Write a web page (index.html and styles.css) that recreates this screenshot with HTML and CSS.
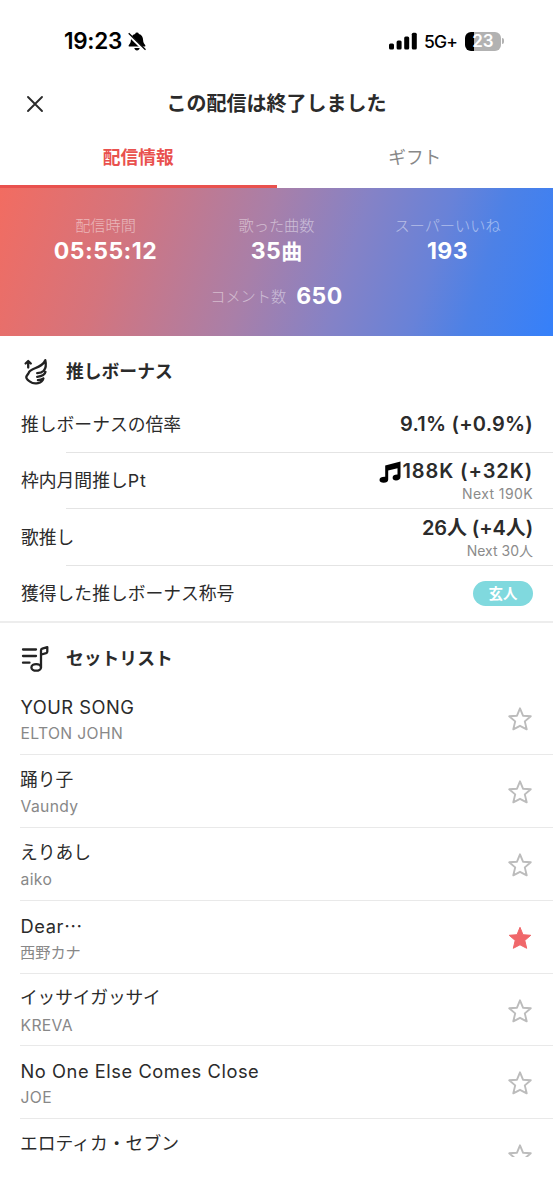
FILE: index.html
```html
<!DOCTYPE html>
<html lang="ja">
<head>
<meta charset="utf-8">
<title>この配信は終了しました</title>
<link rel="stylesheet" href="styles.css">
</head>
<body>
<main class="screen">
  <div class="status">
    <div class="status-left">
      <span class="clock">19:23</span>
      <svg class="bell" viewBox="0 0 18 19"><path d="M9 .5a2 2 0 0 1 1.900 1.400C13.800 2.700 15 5 15.100 8c.1 2.800 1 3.700 2 4.900.6.8.2 1.700-.7 1.700H1.600c-.9 0-1.300-.9-.7-1.700 1-1.200 1.900-2.100 2-4.900.1-3 1.300-5.300 4.200-6.100A2 2 0 0 1 9 .5zM6.300 16h5.400c-.3 1.500-1.300 2.400-2.700 2.400S6.600 17.500 6.300 16z"/><path d="M.2 2.200 16.600 18.400" stroke="#fff" stroke-width="3"/><path d="M.7 1.200 17.500 17.800" stroke="#000" stroke-width="1.300"/></svg>
    </div>
    <div class="status-right">
      <svg class="signal" viewBox="0 0 28 18"><rect x="0" y="11.500" width="5" height="6" rx="1.500"/><rect x="7.600" y="8.500" width="5" height="9" rx="1.500"/><rect x="15.200" y="4.500" width="5" height="13" rx="1.500"/><rect x="22.800" y=".7" width="5" height="16.800" rx="1.500"/></svg>
      <span class="network">5G+</span>
      <span class="battery">23</span><span class="battery-tip"></span>
    </div>
  </div>
  <header class="header">
    <svg class="close" viewBox="0 0 16 16"><path d="M1 1l14 14M15 1L1 15"/></svg>
    <h1>この配信は終了しました</h1>
  </header>
  <nav class="tabs"><a class="tab active">配信情報</a><a class="tab">ギフト</a></nav>

  <section class="stats">
    <div class="stats-row">
      <div class="stat"><span class="label">配信時間</span><b>05:55:12</b></div>
      <div class="stat"><span class="label">歌った曲数</span><b>35<i>曲</i></b></div>
      <div class="stat"><span class="label">スーパーいいね</span><b>193</b></div>
    </div>
    <div class="comments"><span class="label">コメント数</span><b>650</b></div>
  </section>

  <section class="bonus">
    <h2><svg class="icon" viewBox="0 0 28 28"><path d="M7.200 10.600V4.500M4.600 6.500 7.200 4l2.600 2.500M24.300 3.200C22.300 8 18.500 9.500 14 11.300 10.800 12.500 8.500 13.500 7.600 16 7 17.500 5.500 18.500 5.300 20c-.3 2.200 1.700 3.200 3.700 4.600 2 1.600 5 2.200 8 1.500 2.700-.6 4.700-2.100 5.400-4.600M24.300 3.200c1.200 5 .6 8-1.600 10.500-1.500 1.600-3.700 2.300-6.500 2.500M24.500 14.800c-.6 3.300-3.700 4.600-8.300 5M22.400 21.500c-1.400 1-3.200 1.500-5.500 1.600"/></svg>推しボーナス</h2>
    <div class="item"><span class="name">推しボーナスの倍率</span><div class="value"><b class="rate">9.1% (+0.9%)</b></div></div>
    <div class="item"><span class="name">枠内月間推し<span class="unit">Pt</span></span><div class="value"><b class="points"><svg class="note" viewBox="0 0 22 22"><path d="M6.200 4.500 21.500.5v15.200c0 2.500-2 3.800-4.500 3.800-2 0-3.400-.9-3.400-2.700 0-2.200 2-3.300 4.900-3.200V7.200L9.200 9.500v8.900c0 2.200-1.900 3.300-4.500 3.300C2.200 21.700.5 20.700.5 19c0-2.300 2.200-3.300 5.700-3.200z"/></svg>188K (+32K)</b><small>Next 190K</small></div></div>
    <div class="item"><span class="name">歌推し</span><div class="value"><b class="people">26人 (+4人)</b><small class="people-next">Next 30人</small></div></div>
    <div class="item"><span class="name">獲得した推しボーナス称号</span><span class="badge">玄人</span></div>
  </section>

  <section class="setlist">
    <h2><svg class="icon" viewBox="0 0 28 28"><path d="M2 5.500h13M2 12h13M2 18.700h6.500M20 23.300V6.500c0-1 .4-1.500 1.300-1.800l5-1.600v4.400c0 .9-.4 1.400-1.200 1.700L20.500 10.500"/><ellipse cx="15.200" cy="23.400" rx="4.800" ry="3.300"/></svg>セットリスト</h2>
    <div class="song"><div><p class="title caps">YOUR SONG</p><p class="artist en">ELTON JOHN</p></div><svg class="star" viewBox="0 0 24 24"><path d="M12 1.300 15 8.700l7.800.6-6 5.100 1.900 7.900-6.700-3.500-6.700 3.500 1.900-7.900-6-5.100L9 8.700z"/></svg></div>
    <div class="song"><div><p class="title">踊り子</p><p class="artist en">Vaundy</p></div><svg class="star" viewBox="0 0 24 24"><path d="M12 1.300 15 8.700l7.800.6-6 5.100 1.900 7.900-6.700-3.500-6.700 3.500 1.900-7.900-6-5.100L9 8.700z"/></svg></div>
    <div class="song"><div><p class="title">えりあし</p><p class="artist en">aiko</p></div><svg class="star" viewBox="0 0 24 24"><path d="M12 1.300 15 8.700l7.800.6-6 5.100 1.900 7.900-6.700-3.500-6.700 3.500 1.900-7.900-6-5.100L9 8.700z"/></svg></div>
    <div class="song"><div><p class="title latin">Dear<span class="dots">…</span></p><p class="artist">西野カナ</p></div><svg class="star on" viewBox="0 0 24 24"><path d="M12 1.300 15 8.700l7.800.6-6 5.100 1.900 7.900-6.700-3.500-6.700 3.500 1.900-7.900-6-5.100L9 8.700z"/></svg></div>
    <div class="song"><div><p class="title kana">イッサイガッサイ</p><p class="artist en">KREVA</p></div><svg class="star" viewBox="0 0 24 24"><path d="M12 1.300 15 8.700l7.800.6-6 5.100 1.900 7.900-6.700-3.500-6.700 3.500 1.900-7.900-6-5.100L9 8.700z"/></svg></div>
    <div class="song"><div><p class="title latin">No One Else Comes Close</p><p class="artist en">JOE</p></div><svg class="star" viewBox="0 0 24 24"><path d="M12 1.300 15 8.700l7.800.6-6 5.100 1.900 7.900-6.700-3.500-6.700 3.500 1.900-7.900-6-5.100L9 8.700z"/></svg></div>
    <div class="song"><div><p class="title">エロティカ・セブン</p></div><svg class="star" viewBox="0 0 24 24"><path d="M12 1.300 15 8.700l7.800.6-6 5.100 1.900 7.900-6.700-3.500-6.700 3.500 1.900-7.900-6-5.100L9 8.700z"/></svg></div>
  </section>
</main>
</body>
</html>
```
FILE: styles.css
```css
* { box-sizing: border-box; }
body { margin: 0; background: #fff; color: #2b2b2b; font-family: Inter, "Noto Sans CJK JP", sans-serif; }
h1, h2, p { margin: 0; }
i { font-style: normal; }
svg { flex: none; display: block; overflow: visible; }
.screen { height: 1157px; overflow: hidden; }

.status { height: 82px; padding: 0 49px 0 64px; display: flex; justify-content: space-between; align-items: center; color: #000; }
.status-left, .status-right { display: flex; align-items: center; }
.clock { font: 600 22.5px/24px Inter, sans-serif; letter-spacing: -.3px; }
.bell { width: 18px; height: 19px; margin-left: 6px; }
.signal { width: 28px; height: 18px; }
.network { font: 500 17.5px/20px Inter, sans-serif; letter-spacing: -.9px; margin-left: 7px; padding-top: 1px; }
.battery { width: 36px; height: 19px; margin-left: 8px; border-radius: 6px; background: linear-gradient(90deg, #000 9px, #b2b2b2 9px); color: #fff; font: 600 17px/19px Inter, sans-serif; text-align: center; }
.battery-tip { width: 2px; height: 6px; margin-left: 1px; border-radius: 0 2px 2px 0; background: #b2b2b2; }

.header { height: 42px; display: grid; grid-template-columns: 80px 1fr 80px; align-items: center; }
.close { width: 16px; height: 16px; margin: 1px 0 0 27px; fill: none; stroke: #2b2b2b; stroke-width: 1.900; stroke-linecap: round; }
.header h1 { font: 700 20px/30px "Noto Sans CJK JP", sans-serif; text-align: center; white-space: nowrap; }

.tabs { display: flex; height: 64px; }
.tab { flex: 1; text-align: center; color: #888; font: 400 17.7px/64px "Noto Sans CJK JP", sans-serif; border-bottom: 0 solid #e9514e; }
.tab.active { color: #e9514e; font-weight: 700; border-bottom-width: 3px; }

.stats { height: 148px; padding: 25px 20px 0; background: linear-gradient(108deg, #f26c61 0%, #d4747d 22%, #a97fa8 46%, #8582c6 62%, #6882d8 76%, #4d81e6 85%, #3580fa 100%); color: #fff; }
.stats-row { display: grid; grid-template-columns: repeat(3, 1fr); }
.stat { display: flex; flex-direction: column; align-items: center; }
.label { font: 300 15.2px/22px "Noto Sans CJK JP", sans-serif; opacity: .48; }
.stats b { font: 700 23px/30px Inter, "Noto Sans CJK JP", sans-serif; letter-spacing: .5px; }
.stat b { padding-top: 1px; }
.stats b i { font-size: 21px; line-height: 1; letter-spacing: 0; }
.comments { display: flex; justify-content: center; align-items: center; gap: 10px; height: 30px; margin-top: 15px; }
.comments .label { padding-bottom: 2px; }

h2 { display: flex; align-items: center; font: 700 17.800px/26px "Noto Sans CJK JP", sans-serif; }
.icon { width: 28px; height: 28px; margin: 2px 17px 0 21px; fill: none; stroke: #222; stroke-width: 2.300; stroke-linecap: round; stroke-linejoin: round; }
.bonus { height: 287px; border-bottom: 2px solid #ededed; }
.bonus h2 { height: 60px; padding-top: 8px; }
.item { height: 56.500px; padding: 0 20px 0 21px; display: flex; justify-content: space-between; align-items: center; background: linear-gradient(#e4e4e4, #e4e4e4) 66px 100% / 100% 1px no-repeat; }
.item:last-child { background: none; }
.name { font: 400 17.800px/26px Inter, "Noto Sans CJK JP", sans-serif; padding-top: 1px; }
.unit { letter-spacing: 1px; }
.value { display: flex; flex-direction: column; align-items: flex-end; }
.value b { font-size: 20px; font-weight: 600; line-height: 24px; letter-spacing: .4px; display: flex; white-space: pre; }
.value .rate { letter-spacing: .2px; }
.value .points { letter-spacing: .9px; }
.value .people { letter-spacing: -.1px; padding-top: 1px; }
.value small { font-size: 14px; line-height: 19px; padding-top: 1px; letter-spacing: .4px; color: #8b8b8b; }
.value .people-next { letter-spacing: 0; }
.note { width: 22px; height: 22px; margin: 2px 1px 0 0; fill: #000; }
.badge { width: 60px; height: 25px; border-radius: 13px; background: #80d9de; color: #fff; text-align: center; font: 700 14.500px/24px "Noto Sans CJK JP", sans-serif; }

.setlist h2 { height: 59px; padding-top: 8px; }
.song { height: 72.900px; margin-left: 20px; padding-right: 21px; display: flex; align-items: flex-start; justify-content: space-between; border-bottom: 1.500px solid #e9e9e9; }
.title { font-size: 17.800px; line-height: 26px; padding-top: 12px; }
.artist { font-size: 15.200px; line-height: 22px; margin-top: 3px; color: #888; }
.title.caps { font-size: 18.300px; letter-spacing: .5px; }
.title.latin { font-size: 18.300px; letter-spacing: .55px; }
.title.kana { padding-top: 11px; padding-bottom: 1px; letter-spacing: -.2px; }
.artist.en { font-size: 15.700px; letter-spacing: .35px; }
.caps, .latin, .artist.en { padding-left: .5px; }
.dots { font-family: "Noto Sans CJK JP", sans-serif; line-height: 1; letter-spacing: 0; }
.star { width: 24px; height: 24px; margin-top: 25px; fill: none; stroke: #bcbcbc; stroke-width: 1.900; stroke-linejoin: round; }
.star.on { fill: #f0676a; stroke: #f0676a; stroke-width: 1; }
```
